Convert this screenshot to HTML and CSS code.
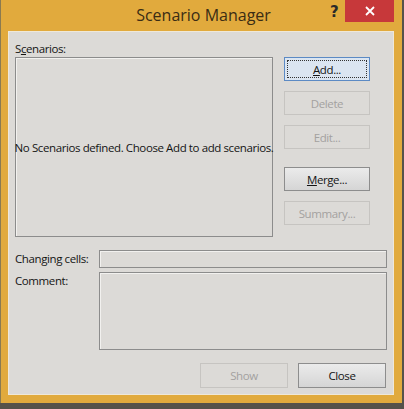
FILE: index.html
```html
<!DOCTYPE html>
<html lang="en">
<head>
  <meta charset="UTF-8">
  <title>Scenario Manager</title>
  <link rel="stylesheet" href="styles.css">
</head>
<body>
  <div class="window">
    <div class="titlebar">
      <div class="title">Scenario Manager</div>
      <div class="help">?</div>
      <div class="close-x">
        <svg width="12" height="12" viewBox="0 0 12 12">
          <path d="M2 2 L10 10 M10 2 L2 10" stroke="#fff" stroke-width="1.8" fill="none"/>
        </svg>
      </div>
    </div>

    <div class="content">
      <div class="label">S<u>c</u>enarios:</div>
      <div class="top">
        <div class="listbox">No Scenarios defined. Choose Add to add scenarios.</div>
        <div class="side">
          <button class="btn default"><u>A</u>dd...</button>
          <button class="btn disabled">Delete</button>
          <button class="btn disabled">Edit...</button>
          <button class="btn normal gap"><u>M</u>erge...</button>
          <button class="btn disabled">Summary...</button>
        </div>
      </div>

      <div class="field">
        <div class="field-label">Changing cells:</div>
        <div class="field-box single"></div>
      </div>
      <div class="field comment">
        <div class="field-label">Comment:</div>
        <div class="field-box multi"></div>
      </div>

      <div class="footer">
        <button class="btn disabled">Show</button>
        <button class="btn normal">Close</button>
      </div>
    </div>
  </div>
</body>
</html>
```

FILE: styles.css
```css
body {
  margin: 0;
  padding: 0;
  background: #55524a;
  font-family: "Open Sans", "Noto Sans", sans-serif;
  font-size: 11.5px;
  letter-spacing: -0.4px;
  color: #141414;
}
.window {
  width: 402px;
  height: 403px;
  background: #e1aa3d;
  display: flex;
  flex-direction: column;
  box-sizing: border-box;
  border-left: 1px solid #8a7a50;
}
.titlebar {
  height: 31px;
  display: flex;
  position: relative;
}
.title {
  flex: 1;
  text-align: center;
  font-size: 16px;
  letter-spacing: 0;
  line-height: 30px;
  color: #3a2c14;
  padding-left: 4px;
}
.help {
  position: absolute;
  left: 329px;
  top: 3px;
  font-weight: bold;
  font-size: 15px;
  letter-spacing: 0;
  color: #2a2a2a;
  font-family: "DejaVu Sans", sans-serif;
}
.close-x {
  position: absolute;
  left: 344px;
  top: 0;
  width: 49px;
  height: 22px;
  background: #c7383a;
  display: flex;
  justify-content: center;
  align-items: center;
}
.content {
  flex: 1;
  margin: 0 8px 8px 7px;
  background: #dcdad7;
  border: 1px solid #efe8d8;
  padding: 8px 6px 0 6px;
}
.label {
  line-height: 17px;
}
.top {
  display: flex;
  gap: 11px;
}
.listbox {
  width: 258px;
  height: 180px;
  box-sizing: border-box;
  border: 1px solid #8c8c8c;
  box-shadow: inset 1px 1px 0 #f2f1ef;
  display: flex;
  align-items: center;
  justify-content: center;
  white-space: nowrap;
}
.side {
  display: flex;
  flex-direction: column;
  gap: 10px;
}
.btn {
  width: 86px;
  height: 24px;
  font-family: inherit;
  font-size: 11.5px;
  letter-spacing: -0.4px;
  padding: 0;
  box-sizing: border-box;
  background: #dcdad7;
  color: #141414;
}
.btn.default {
  background: #dbe5f1;
  border: 1px solid #5c8ac4;
  outline: 1px dotted #333;
  outline-offset: -4px;
}
.btn.disabled {
  border: 1px solid #c6c4c1;
  color: #a3a19f;
}
.btn.normal {
  border: 1px solid #8d8d8d;
  background: linear-gradient(#ebebeb, #d5d5d5);
}
.btn.gap {
  margin-top: 8px;
}
.field {
  display: flex;
  margin-top: 13px;
}
.field.comment {
  margin-top: 4px;
}
.field-label {
  width: 84px;
  line-height: 17px;
}
.field-box {
  flex: 1;
  box-sizing: border-box;
  border: 1px solid #8c8c8c;
  box-shadow: inset 1px 1px 0 #f2f1ef;
}
.field-box.single {
  height: 18px;
}
.field-box.multi {
  height: 78px;
}
.footer {
  display: flex;
  justify-content: flex-end;
  gap: 10px;
  margin-top: 13px;
  padding-right: 1px;
}
.footer .btn {
  width: 88px;
  height: 25px;
}
```
